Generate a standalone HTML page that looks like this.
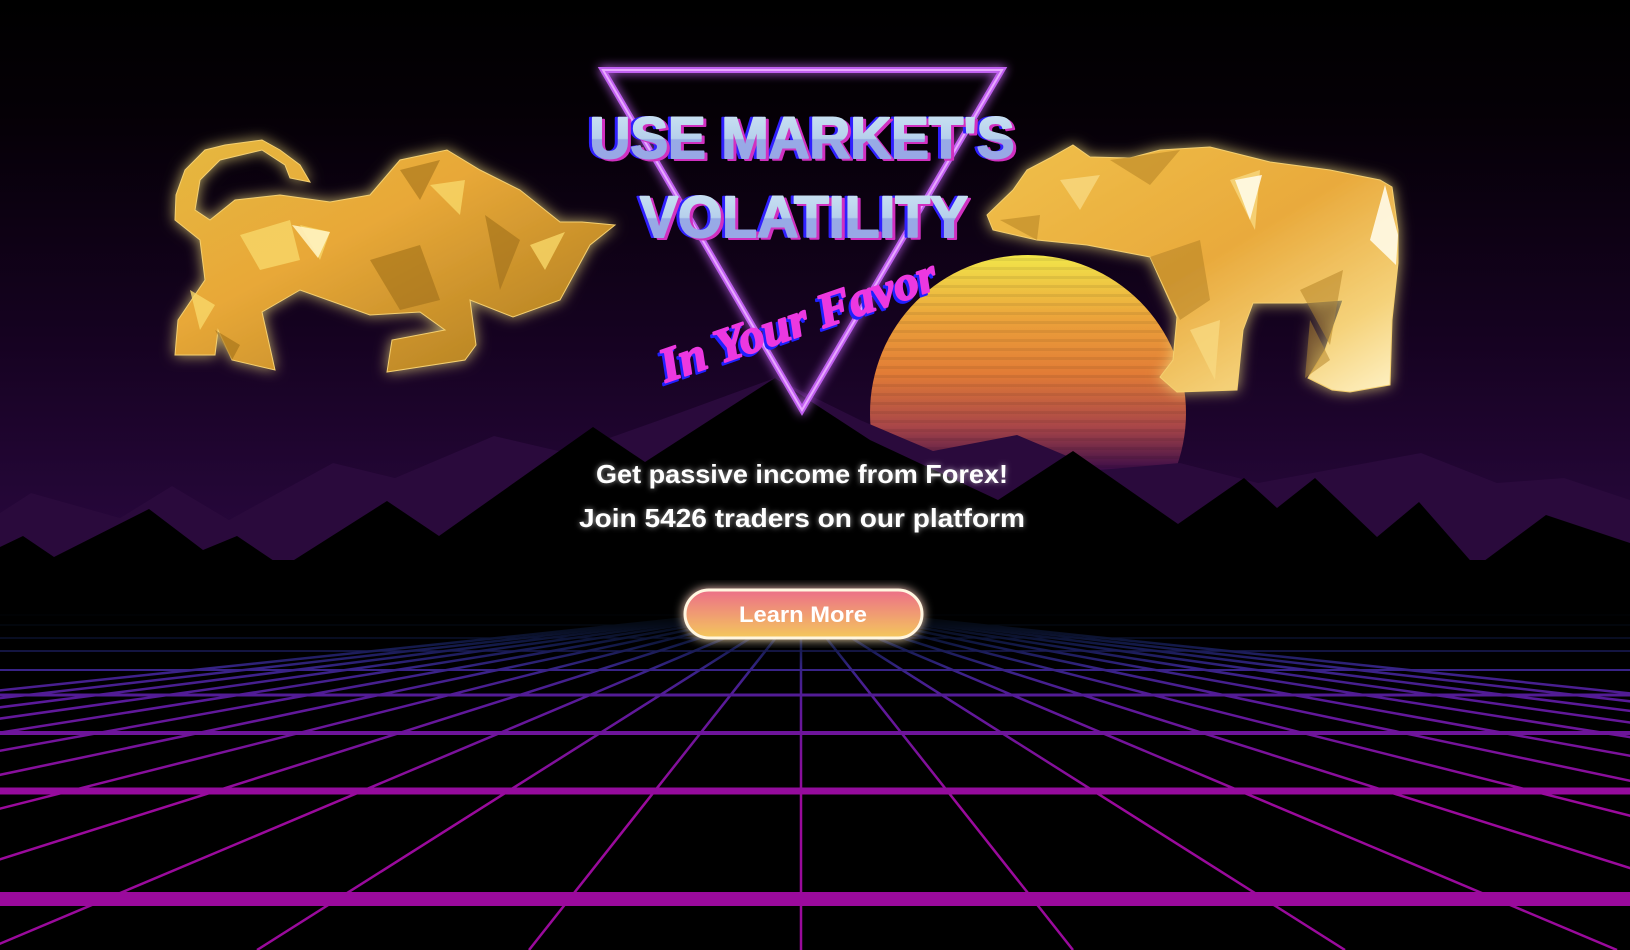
<!DOCTYPE html>
<html><head><meta charset="utf-8"><style>
html,body{margin:0;padding:0;background:#000;width:1630px;height:950px;overflow:hidden}
svg{display:block}
</style></head><body>
<svg width="1630" height="950" viewBox="0 0 1630 950" xmlns="http://www.w3.org/2000/svg">
<defs>
<linearGradient id="sky" x1="0" y1="0" x2="0" y2="1">
<stop offset="0" stop-color="#000"/><stop offset="0.12" stop-color="#050006"/><stop offset="0.35" stop-color="#150220"/><stop offset="0.6" stop-color="#2a0840"/><stop offset="0.7" stop-color="#340a4c"/></linearGradient>
<linearGradient id="sun" x1="0" y1="255" x2="0" y2="470" gradientUnits="userSpaceOnUse">
<stop offset="0" stop-color="#f2e64a"/><stop offset="0.3" stop-color="#eba23a"/><stop offset="0.55" stop-color="#e27c36"/><stop offset="0.8" stop-color="#a84648"/><stop offset="1" stop-color="#3a0c48"/></linearGradient>
<pattern id="stripes" width="10" height="9" patternUnits="userSpaceOnUse"><rect y="6" width="10" height="3" fill="#000" opacity="0.07"/></pattern>
<linearGradient id="grid" x1="0" y1="605" x2="0" y2="800" gradientUnits="userSpaceOnUse">
<stop offset="0" stop-color="#0a2a3a"/><stop offset="0.2" stop-color="#1e2a78"/><stop offset="0.5" stop-color="#5a1a9a"/><stop offset="1" stop-color="#9a0a9c"/></linearGradient>
<linearGradient id="fade" x1="0" y1="0" x2="0" y2="1">
<stop offset="0" stop-color="#000" stop-opacity="1"/><stop offset="0.4" stop-color="#000" stop-opacity="0.6"/><stop offset="1" stop-color="#000" stop-opacity="0"/></linearGradient>
<linearGradient id="title" x1="0" y1="0" x2="0" y2="1">
<stop offset="0" stop-color="#cfe6f4"/><stop offset="0.5" stop-color="#b6d0ec"/><stop offset="0.52" stop-color="#97aae6"/><stop offset="1" stop-color="#9aa6e6"/></linearGradient>
<linearGradient id="btn" x1="0" y1="0" x2="0" y2="1">
<stop offset="0" stop-color="#ec6f88"/><stop offset="1" stop-color="#f4c85c"/></linearGradient>
<linearGradient id="gold" x1="0" y1="0" x2="1" y2="1">
<stop offset="0" stop-color="#e6b840"/><stop offset="0.4" stop-color="#e8a838"/><stop offset="0.7" stop-color="#c8902a"/><stop offset="1" stop-color="#a87a20"/></linearGradient>
<linearGradient id="gold2" x1="0" y1="0" x2="1" y2="1">
<stop offset="0" stop-color="#f0c04a"/><stop offset="0.5" stop-color="#e9aa3c"/><stop offset="0.8" stop-color="#f5d27a"/><stop offset="1" stop-color="#fff3c8"/></linearGradient>
<filter id="glowY" x="-20%" y="-20%" width="140%" height="140%"><feGaussianBlur in="SourceAlpha" stdDeviation="7" result="b"/><feFlood flood-color="#f3e080" flood-opacity="0.75" result="f"/><feComposite operator="in" in="f" in2="b" result="g"/><feMerge><feMergeNode in="g"/><feMergeNode in="SourceGraphic"/></feMerge></filter>
<filter id="glowP" x="-20%" y="-20%" width="140%" height="140%"><feGaussianBlur stdDeviation="5" result="b"/><feMerge><feMergeNode in="b"/><feMergeNode in="SourceGraphic"/></feMerge></filter>
<filter id="glowW" x="-10%" y="-30%" width="120%" height="160%"><feGaussianBlur in="SourceAlpha" stdDeviation="3" result="b"/><feFlood flood-color="#fff" flood-opacity="0.6" result="f"/><feComposite operator="in" in="f" in2="b" result="g"/><feMerge><feMergeNode in="g"/><feMergeNode in="SourceGraphic"/></feMerge></filter>
</defs>
<rect width="1630" height="950" fill="url(#sky)"/>
<circle cx="1028" cy="413" r="158" fill="url(#sun)"/>
<circle cx="1028" cy="413" r="158" fill="url(#stripes)"/>
<polygon fill="#2a0a3c" points="0,513 31,493 120,518 172,486 229,520 333,463 395,478 494,436 567,453 660,420 775,378 860,420 933,451 1017,435 1100,470 1180,463 1258,483 1421,453 1497,483 1564,478 1630,500 1630,620 0,620"/>
<polygon fill="#000" points="0,547 23,536 54,557 149,509 203,550 237,536 283,567 387,501 439,536 593,427 645,462 775,378 870,440 998,500 1073,451 1178,524 1244,478 1277,508 1315,478 1377,537 1419,502 1476,567 1546,515 1630,543 1630,950 0,950"/>
<g stroke="url(#grid)" fill="none">
<line x1="0" y1="615" x2="1630" y2="615" stroke-width="1"/>
<line x1="0" y1="625" x2="1630" y2="625" stroke-width="1"/>
<line x1="0" y1="638" x2="1630" y2="638" stroke-width="1.2"/>
<line x1="0" y1="651" x2="1630" y2="651" stroke-width="1.5"/>
<line x1="0" y1="670" x2="1630" y2="670" stroke-width="2"/>
<line x1="0" y1="695" x2="1630" y2="695" stroke-width="3"/>
<line x1="0" y1="733" x2="1630" y2="733" stroke-width="4"/>
<line x1="0" y1="791" x2="1630" y2="791" stroke-width="7"/>
<line x1="0" y1="899" x2="1630" y2="899" stroke-width="14"/>
<g stroke-width="2.5">
<line x1="801" y1="606" x2="801" y2="950"/>
<line x1="801" y1="606" x2="1073" y2="950"/><line x1="801" y1="606" x2="529" y2="950"/>
<line x1="801" y1="606" x2="1345" y2="950"/><line x1="801" y1="606" x2="257" y2="950"/>
<line x1="801" y1="606" x2="1617" y2="950"/><line x1="801" y1="606" x2="-15" y2="950"/>
<line x1="801" y1="606" x2="1889" y2="950"/><line x1="801" y1="606" x2="-287" y2="950"/>
<line x1="801" y1="606" x2="2161" y2="950"/><line x1="801" y1="606" x2="-559" y2="950"/>
<line x1="801" y1="606" x2="2433" y2="950"/><line x1="801" y1="606" x2="-831" y2="950"/>
<line x1="801" y1="606" x2="2705" y2="950"/><line x1="801" y1="606" x2="-1103" y2="950"/>
<line x1="801" y1="606" x2="2977" y2="950"/><line x1="801" y1="606" x2="-1375" y2="950"/>
<line x1="801" y1="606" x2="3249" y2="950"/><line x1="801" y1="606" x2="-1647" y2="950"/>
<line x1="801" y1="606" x2="3521" y2="950"/><line x1="801" y1="606" x2="-1919" y2="950"/>
<line x1="801" y1="606" x2="3793" y2="950"/><line x1="801" y1="606" x2="-2191" y2="950"/>
<line x1="801" y1="606" x2="4065" y2="950"/><line x1="801" y1="606" x2="-2463" y2="950"/>
</g></g>
<rect x="0" y="560" width="1630" height="50" fill="#000"/>
<rect x="0" y="609" width="1630" height="60" fill="url(#fade)"/>
<polygon points="603,70 1002,70 802,410" fill="none" stroke="#c060f0" stroke-width="6" stroke-linejoin="miter" filter="url(#glowP)"/>
<polygon points="603,70 1002,70 802,410" fill="none" stroke="#e8a8ff" stroke-width="2"/>
<!-- bull -->
<g filter="url(#glowY)">
<path fill="url(#gold)" stroke="#f5d070" stroke-width="1" d="M310,182 L300,165 L280,150 L262,140 L225,145 L205,150 L185,170 L176,195 L175,220 L190,232 L200,240 L205,280 L178,320 L175,355 L215,355 L218,330 L232,360 L275,370 L262,312 L300,290 L370,315 L420,312 L445,330 L392,340 L387,372 L465,360 L476,345 L470,300 L513,317 L560,300 L590,245 L615,225 L582,222 L560,222 L520,190 L480,170 L447,150 L400,160 L370,195 L330,202 L280,195 L235,200 L210,220 L195,210 L200,180 L220,160 L262,150 L285,165 L290,178 Z"/>
<path fill="#f7d768" opacity="0.8" d="M240,235 L290,220 L300,260 L260,270 Z M300,225 L330,232 L320,260 Z M430,185 L465,180 L460,215 Z M190,290 L215,305 L200,330 Z M530,245 L565,232 L545,270 Z"/>
<path fill="#fff3c0" opacity="0.9" d="M292,225 L330,232 L318,258 Z"/>
<path fill="#9a6c18" opacity="0.55" d="M370,260 L420,245 L440,300 L400,310 Z M485,215 L520,240 L500,290 Z M215,330 L240,345 L232,360 Z M400,170 L440,160 L420,200 Z"/>
</g>
<!-- bear -->
<g filter="url(#glowY)">
<path fill="url(#gold2)" stroke="#f5d070" stroke-width="1" d="M1073,145 L1090,157 L1130,158 L1160,150 L1210,147 L1270,162 L1330,170 L1380,180 L1392,187 L1398,230 L1398,263 L1392,320 L1390,385 L1350,392 L1332,390 L1308,378 L1325,350 L1343,300 L1303,303 L1253,303 L1243,330 L1237,390 L1177,392 L1160,377 L1173,360 L1177,317 L1150,257 L1087,245 L1037,240 L993,230 L987,215 L1013,190 L1027,170 L1050,158 Z"/>
<path fill="#b07e22" opacity="0.5" d="M1150,257 L1200,240 L1210,300 L1180,320 Z M1300,290 L1343,270 L1330,345 Z M1310,320 L1330,360 L1305,378 Z M1000,220 L1040,215 L1037,240 Z M1110,160 L1180,150 L1150,185 Z"/>
<path fill="#f8d880" opacity="0.8" d="M1230,180 L1260,170 L1255,230 Z M1060,180 L1100,175 L1080,210 Z M1190,330 L1220,320 L1215,380 Z"/>
<path fill="#fffbe8" opacity="0.9" d="M1385,185 L1398,235 L1396,265 L1370,240 Z M1235,180 L1262,175 L1250,220 Z"/>
</g>
<!-- title -->
<g font-family="'Liberation Sans',sans-serif" font-weight="bold" text-anchor="middle" font-size="58" stroke-linejoin="round">
<text x="799" y="158" fill="#3020ff" stroke="#3020ff" stroke-width="2" textLength="425" lengthAdjust="spacingAndGlyphs">USE MARKET'S</text>
<text x="805" y="160" fill="#d030c0" stroke="#d030c0" stroke-width="2" textLength="425" lengthAdjust="spacingAndGlyphs">USE MARKET'S</text>
<text x="802" y="158" fill="url(#title)" stroke="url(#title)" stroke-width="2" textLength="425" lengthAdjust="spacingAndGlyphs">USE MARKET'S</text>
<text x="801" y="237" fill="#3020ff" stroke="#3020ff" stroke-width="2" textLength="328" lengthAdjust="spacingAndGlyphs">VOLATILITY</text>
<text x="807" y="239" fill="#d030c0" stroke="#d030c0" stroke-width="2" textLength="328" lengthAdjust="spacingAndGlyphs">VOLATILITY</text>
<text x="804" y="237" fill="url(#title)" stroke="url(#title)" stroke-width="2" textLength="328" lengthAdjust="spacingAndGlyphs">VOLATILITY</text>
</g>
<g transform="translate(803,335) rotate(-19)" font-family="'Liberation Serif',serif" font-style="italic" font-weight="bold" font-size="48" text-anchor="middle" stroke-linejoin="round">
<text x="-3" y="2" fill="#2020ff" stroke="#2020ff" stroke-width="2" textLength="290" lengthAdjust="spacingAndGlyphs">In Your Favor</text>
<text x="0" y="0" fill="#ec38e0" stroke="#ec38e0" stroke-width="2" textLength="290" lengthAdjust="spacingAndGlyphs">In Your Favor</text>
</g>
<g font-family="'Liberation Sans',sans-serif" font-weight="bold" fill="#fff" text-anchor="middle" filter="url(#glowW)">
<text x="802" y="483" font-size="26" textLength="412" lengthAdjust="spacingAndGlyphs">Get passive income from Forex!</text>
<text x="802" y="527" font-size="26" textLength="446" lengthAdjust="spacingAndGlyphs">Join 5426 traders on our platform</text>
</g>
<rect x="685" y="590" width="237" height="48" rx="24" fill="url(#btn)" stroke="#fff6e0" stroke-width="3" filter="url(#glowP)"/>
<text x="803" y="622" font-family="'Liberation Sans',sans-serif" font-weight="bold" font-size="22" fill="#fff" text-anchor="middle" textLength="128" lengthAdjust="spacingAndGlyphs">Learn More</text>
</svg>
</body></html>
